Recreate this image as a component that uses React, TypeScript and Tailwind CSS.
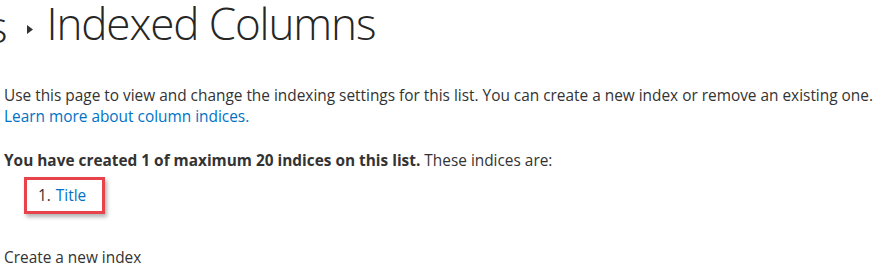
export default function App() {
    return (
        <div className="w-[875px] h-[276px] overflow-hidden bg-white text-[#333333] font-['Open_Sans',sans-serif]">
            <div className="flex items-center h-[52px] ml-[-13px] font-light text-[44px] tracking-[-1.1px] leading-none text-[#262626]">
                <span>s</span>
                <svg width="6" height="9" viewBox="0 0 6 9" className="ml-[21px] mr-[13px] mt-[6px]">
                    <path d="M0 0 L6 4.5 L0 9 Z" fill="#333" />
                </svg>
                <span className="mt-[-6px]">Indexed Columns</span>
            </div>

            <div className="pl-[4px] pt-[33px] text-[15.4px] leading-[21px]">
                <p>
                    Use this page to view and change the indexing settings for this list. You can create a new
                    index or remove an existing one.
                </p>
                <a className="text-[#0072c6]">Learn more about column indices.</a>

                <p className="mt-[23px]">
                    <span className="font-bold">You have created 1 of maximum 20 indices on this list.</span>{" "}
                    These indices are:
                </p>

                <div className="mt-[6px] ml-[20px] w-[81px] h-[37px] border-[3px] border-[#e8434a] shadow-[2px_3px_4px_rgba(0,0,0,0.3)] flex items-center pl-[11px]">
                    <span>1.</span>
                    <a className="ml-[5px] text-[#0072c6]">Title</a>
                </div>

                <p className="mt-[33px]">Create a new index</p>
            </div>
        </div>
    );
}
